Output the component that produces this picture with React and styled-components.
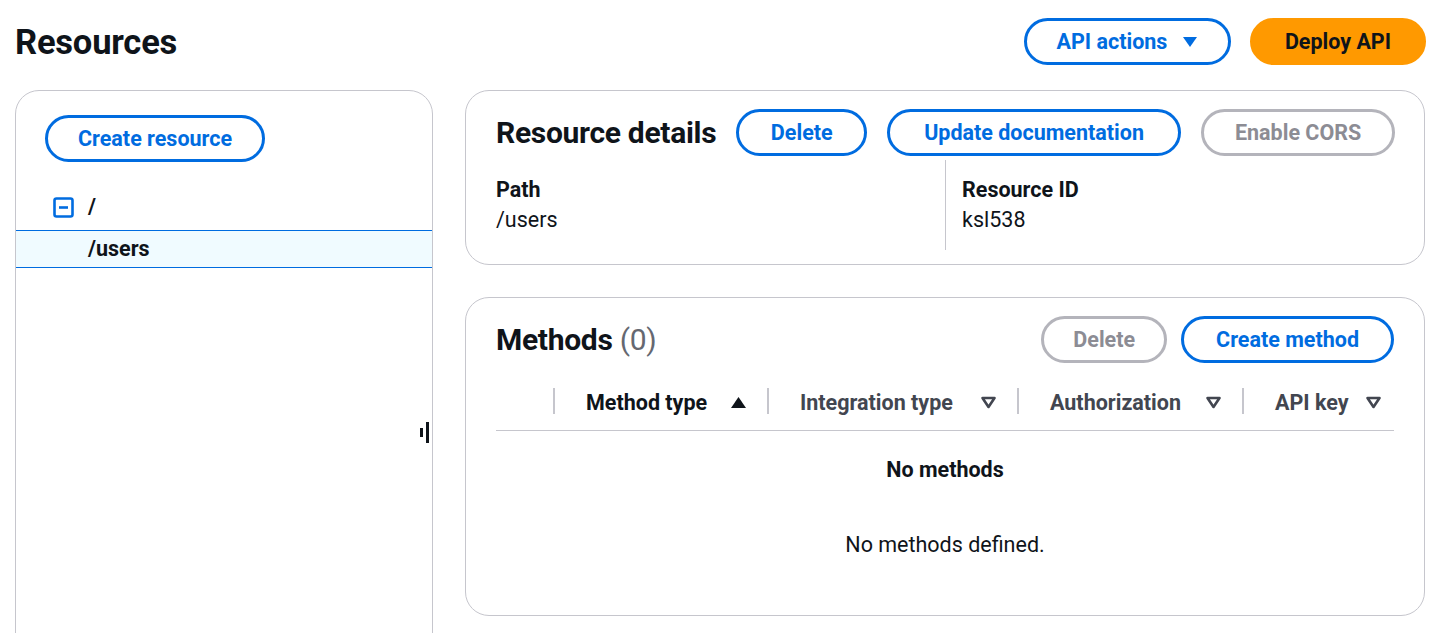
import React from 'react';
import styled, { createGlobalStyle } from 'styled-components';

const GlobalStyle = createGlobalStyle`
  html, body {
    margin: 0;
    padding: 0;
    background: #ffffff;
    overflow: hidden;
  }
  body {
    font-family: Roboto, "Liberation Sans", sans-serif;
    font-size: 21.5px;
    line-height: 30px;
    color: #0f141a;
  }
`;

const Page = styled.div`
  padding: 18px 9px 0 15px;
  height: 633px;
  box-sizing: border-box;
  overflow: hidden;
`;

const TopBar = styled.header`
  display: flex;
  align-items: center;
  justify-content: space-between;
  height: 47px;
`;

const PageTitle = styled.h1`
  margin: 0;
  font-size: 34.5px;
  font-weight: 700;
  letter-spacing: -0.2px;
`;

const Actions = styled.div`
  display: flex;
  gap: 19px;
  margin-right: -1px;
`;

const Button = styled.button`
  display: inline-flex;
  align-items: center;
  justify-content: center;
  gap: 15px;
  flex-shrink: 0;
  box-sizing: border-box;
  height: 47px;
  padding: 6px ${(p) => p.$px || 30}px;
  border-radius: 24px;
  border: 3px solid ${(p) => (p.$disabled ? '#b4b4bb' : p.$primary ? '#ff9900' : '#006ce0')};
  background: ${(p) => (p.$primary ? '#ff9900' : '#ffffff')};
  color: ${(p) => (p.$disabled ? '#8c8c94' : p.$primary ? '#0f141a' : '#006ce0')};
  font-family: inherit;
  font-size: 21.5px;
  font-weight: 700;
  line-height: 29px;
  white-space: nowrap;
  cursor: ${(p) => (p.$disabled ? 'default' : 'pointer')};
`;

const Layout = styled.main`
  display: grid;
  grid-template-columns: 418px minmax(0, 1fr);
  gap: 32px;
  margin-top: 25px;
`;

const SidePanel = styled.aside`
  position: relative;
  box-sizing: border-box;
  min-height: 600px;
  border: 1px solid #c6c6cd;
  border-radius: 24px 24px 0 0;
  padding-top: 24px;
`;

const PanelButtonArea = styled.div`
  padding-left: 29px;
`;

const Tree = styled.ul`
  list-style: none;
  margin: 26px 0 0;
  padding: 0;
  display: flex;
  flex-direction: column;
  gap: 4px;
`;

const TreeRow = styled.li`
  display: flex;
  align-items: center;
  gap: 14px;
  box-sizing: border-box;
  height: 38px;
  padding-left: ${(p) => p.$indent}px;
  border-top: 1px solid ${(p) => (p.$selected ? '#006ce0' : 'transparent')};
  border-bottom: 1px solid ${(p) => (p.$selected ? '#006ce0' : 'transparent')};
  background: ${(p) => (p.$selected ? '#f0fbff' : 'transparent')};
  font-weight: 700;
`;

const ResizeHandle = styled.div`
  position: absolute;
  top: 331px;
  right: 3px;
  display: flex;
  align-items: center;
  gap: 3px;
  height: 21px;

  span {
    display: block;
    width: 3px;
    background: #0f141a;
  }
  span:first-child {
    height: 9px;
  }
  span:last-child {
    height: 21px;
  }
`;

const Column = styled.div`
  display: flex;
  flex-direction: column;
  gap: 32px;
  min-width: 0;
`;

const Card = styled.section`
  box-sizing: border-box;
  border: 1px solid #c6c6cd;
  border-radius: 24px;
  padding: 18px 30px ${(p) => p.$pb || 14}px;
`;

const CardHeader = styled.div`
  display: flex;
  align-items: center;
  gap: ${(p) => p.$gap || 20}px;
  height: 47px;
`;

const CardTitle = styled.h2`
  margin: 0;
  font-size: 30px;
  font-weight: 700;
  line-height: 40px;
  letter-spacing: -0.3px;
  white-space: nowrap;
  margin-right: ${(p) => (p.$grow ? 'auto' : '0')};

  span {
    font-weight: 400;
    color: #656871;
  }
`;

const KeyValues = styled.div`
  display: grid;
  grid-template-columns: 1fr 1fr;
  margin-top: 4px;
`;

const KeyValue = styled.div`
  padding: 15px 0 15px ${(p) => (p.$divided ? 16 : 0)}px;
  border-left: ${(p) => (p.$divided ? '1px solid #c6c6cd' : 'none')};
`;

const Label = styled.div`
  font-weight: 700;
`;

const Table = styled.div`
  margin-top: 9px;
`;

const HeaderRow = styled.div`
  display: grid;
  grid-template-columns: 57px 214px 250px 225px 1fr;
  height: 58px;
  border-bottom: 1px solid #c6c6cd;
`;

const HeaderCell = styled.div`
  position: relative;
  display: flex;
  align-items: center;
  justify-content: space-between;
  padding: 3px ${(p) => (p.$last ? 12 : 20)}px 0 33px;
  font-weight: 700;
  color: ${(p) => (p.$sorted ? '#0f141a' : '#424650')};

  &::before {
    content: '';
    position: absolute;
    left: 0;
    top: 16px;
    width: 2px;
    height: 26px;
    background: #c6c6cd;
  }
`;

const EmptyState = styled.div`
  display: flex;
  flex-direction: column;
  align-items: center;
  gap: 45px;
  padding: 24px 0 32px;
`;

const EmptyTitle = styled.div`
  font-weight: 700;
`;

const CaretDown = () => (
  <svg width="16" height="12" viewBox="0 0 16 12">
    <path d="M1 1h14L8 11z" fill="currentColor" />
  </svg>
);

const SortUp = () => (
  <svg width="17" height="13" viewBox="0 0 17 13">
    <path d="M8.5 1L16 12H1z" fill="#0f141a" />
  </svg>
);

const SortDown = () => (
  <svg width="17" height="13" viewBox="0 0 17 13">
    <path d="M2.5 2h12L8.5 11z" fill="none" stroke="#424650" strokeWidth="2.6" strokeLinejoin="round" />
  </svg>
);

const CollapseIcon = () => (
  <svg width="21" height="21" viewBox="0 0 21 21">
    <rect x="1.5" y="1.5" width="18" height="18" rx="2" fill="none" stroke="#006ce0" strokeWidth="2.6" />
    <path d="M6 10.5h9" stroke="#006ce0" strokeWidth="2.6" />
  </svg>
);

const columns = [
  { name: 'Method type', sorted: true },
  { name: 'Integration type' },
  { name: 'Authorization' },
  { name: 'API key', last: true },
];

const App = () => {
  return (
    <>
      <GlobalStyle />
      <Page>
        <TopBar>
          <PageTitle>Resources</PageTitle>
          <Actions>
            <Button $px={29.5}>
              API actions <CaretDown />
            </Button>
            <Button $primary $px={32}>Deploy API</Button>
          </Actions>
        </TopBar>

        <Layout>
          <SidePanel>
            <PanelButtonArea>
              <Button>Create resource</Button>
            </PanelButtonArea>
            <Tree>
              <TreeRow $indent={37}>
                <CollapseIcon />/
              </TreeRow>
              <TreeRow $indent={72} $selected>
                /users
              </TreeRow>
            </Tree>
            <ResizeHandle>
              <span />
              <span />
            </ResizeHandle>
          </SidePanel>

          <Column>
            <Card>
              <CardHeader>
                <CardTitle>Resource details</CardTitle>
                <Button $px={31.5}>Delete</Button>
                <Button $px={34}>Update documentation</Button>
                <Button $disabled $px={31}>Enable CORS</Button>
              </CardHeader>
              <KeyValues>
                <KeyValue>
                  <Label>Path</Label>
                  <div>/users</div>
                </KeyValue>
                <KeyValue $divided>
                  <Label>Resource ID</Label>
                  <div>ksl538</div>
                </KeyValue>
              </KeyValues>
            </Card>

            <Card $pb={23}>
              <CardHeader $gap={14}>
                <CardTitle $grow>
                  Methods <span>(0)</span>
                </CardTitle>
                <Button $disabled $px={29}>Delete</Button>
                <Button $px={32}>Create method</Button>
              </CardHeader>
              <Table>
                <HeaderRow>
                  <div />
                  {columns.map((col) => (
                    <HeaderCell key={col.name} $sorted={col.sorted} $last={col.last}>
                      {col.name}
                      {col.sorted ? <SortUp /> : <SortDown />}
                    </HeaderCell>
                  ))}
                </HeaderRow>
                <EmptyState>
                  <EmptyTitle>No methods</EmptyTitle>
                  <div>No methods defined.</div>
                </EmptyState>
              </Table>
            </Card>
          </Column>
        </Layout>
      </Page>
    </>
  );
};

export default App;
